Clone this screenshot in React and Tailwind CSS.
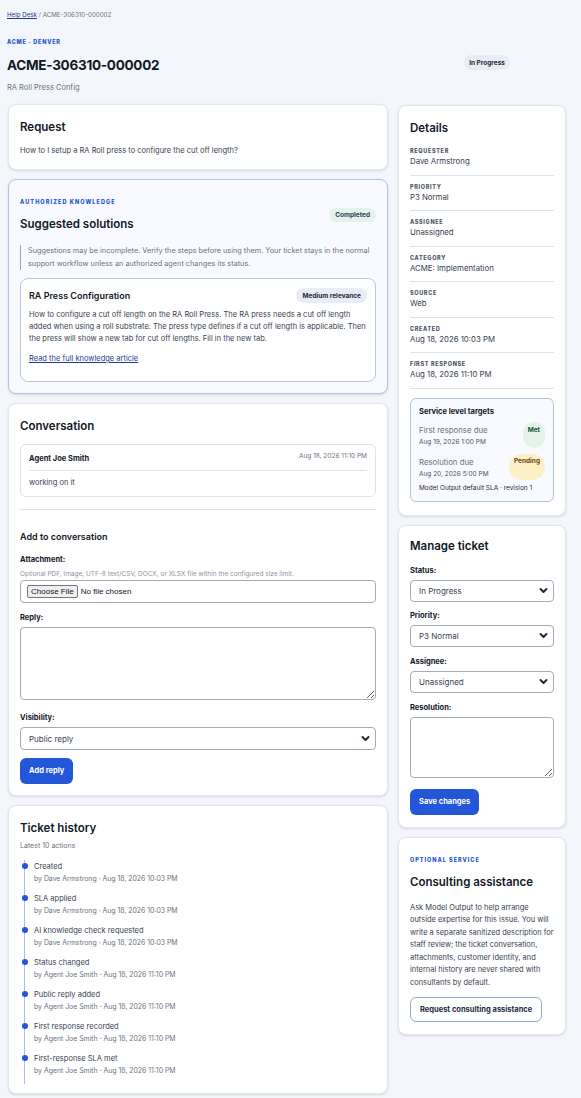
import React from 'react';

const font = { fontFamily: 'Inter, "Noto Sans", sans-serif' };

const Chevron = () => (
  <svg viewBox="0 0 12 12" className="w-[9px] h-[9px]" fill="none" stroke="#1f2937" strokeWidth="2.6" strokeLinecap="round" strokeLinejoin="round">
    <path d="M2 4l4 4 4-4" />
  </svg>
);

const FakeSelect = ({ value, tall }) => (
  <div className={`${tall ? 'h-[23px]' : 'h-[22px]'} border border-[#a3abb9] rounded-[4px] bg-white flex items-center justify-between pl-[8px] pr-[5px] text-[8px] text-[#374151]`}>
    <span>{value}</span>
    <Chevron />
  </div>
);

const Label = ({ children }) => (
  <div className="text-[7.5px] font-bold text-[#111827] leading-[10px]">{children}</div>
);

const Card = ({ className = '', children }) => (
  <div className={`rounded-[8px] border px-[11px] ${className}`}>{children}</div>
);

const details = [
  ['Requester', 'Dave Armstrong'],
  ['Priority', 'P3 Normal'],
  ['Assignee', 'Unassigned'],
  ['Category', 'ACME: Implementation'],
  ['Source', 'Web'],
  ['Created', 'Aug 18, 2026 10:03 PM'],
  ['First response', 'Aug 18, 2026 11:10 PM'],
];

const history = [
  ['Created', 'by Dave Armstrong · Aug 18, 2026 10:03 PM'],
  ['SLA applied', 'by Dave Armstrong · Aug 18, 2026 10:03 PM'],
  ['AI knowledge check requested', 'by Dave Armstrong · Aug 18, 2026 10:03 PM'],
  ['Status changed', 'by Agent Joe Smith · Aug 18, 2026 11:10 PM'],
  ['Public reply added', 'by Agent Joe Smith · Aug 18, 2026 11:10 PM'],
  ['First response recorded', 'by Agent Joe Smith · Aug 18, 2026 11:10 PM'],
  ['First-response SLA met', 'by Agent Joe Smith · Aug 18, 2026 11:10 PM'],
];

export default function App() {
  return (
    <div style={font} className="min-h-[1098px] bg-[#f3f6fb] text-[#111827]">
      {/* page header */}
      <div className="pl-[7px] pr-[71px] pt-[10px]">
        <div className="text-[6.2px] leading-[10px] text-[#6b7280]">
          <span className="underline text-[#1e3a8a]">Help Desk</span> / ACME-306310-000002
        </div>
        <div className="flex items-start justify-between mt-[18px]">
          <div>
            <div className="text-[5.5px] font-extrabold tracking-[0.14em] text-[#2150d0] leading-[8px]">ACME · DENVER</div>
            <h1 className="text-[13.5px] font-bold leading-[22px] mt-[8px] tracking-[-0.02em]">ACME-306310-000002</h1>
          </div>
          <span className="mt-[17px] rounded-full bg-[#e8ecf4] px-[5px] py-[3.5px] text-[6.5px] font-bold text-[#1f2937] leading-[8px]">In Progress</span>
        </div>
        <div className="text-[7.5px] text-[#6b7280] leading-[12px] mt-[6px]">RA Roll Press Config</div>
      </div>

      <div className="grid grid-cols-[380px_168px] gap-x-[10px] pl-[8px] mt-[10px]">
        {/* main column */}
        <div className="flex flex-col gap-[9px]">
          <Card className="bg-white border-[#e2e7ef] shadow-sm pt-[14px] pb-[12px]">
            <h2 className="text-[11.5px] font-semibold leading-[16px]">Request</h2>
            <p className="text-[7.5px] leading-[12px] text-[#374151] mt-[10px]">How to I setup a RA Roll press to configure the cut off length?</p>
          </Card>

          <Card className="bg-[#f8faff] border-[#b2c4e6] shadow-sm pt-[18px] pb-[11px]">
            <div className="flex items-center justify-between">
              <div>
                <div className="text-[5.5px] font-extrabold tracking-[0.2em] text-[#2150d0] leading-[8px]">AUTHORIZED KNOWLEDGE</div>
                <h2 className="text-[11.5px] font-semibold leading-[16px] mt-[10px]">Suggested solutions</h2>
              </div>
              <span className="rounded-full bg-[#e3f2ea] px-[6px] py-[3px] text-[6.5px] font-bold text-[#334155] leading-[8px]">Completed</span>
            </div>
            <p className="mt-[13px] border-l border-[#8ea3c9] pl-[7px] text-[7.3px] leading-[12.5px] text-[#6b7280]">
              Suggestions may be incomplete. Verify the steps before using them. Your ticket stays in the normal support workflow unless an authorized agent changes its status.
            </p>
            <div className="mt-[8px] bg-white border border-[#b9c8e6] rounded-[8px] px-[8px] pt-[9px] pb-[16px]">
              <div className="flex items-center justify-between">
                <h3 className="text-[9px] font-semibold leading-[14px]">RA Press Configuration</h3>
                <span className="rounded-full bg-[#e8ecf4] px-[6px] py-[3.5px] text-[6.5px] font-bold text-[#1f2937] leading-[8px]">Medium relevance</span>
              </div>
              <p className="mt-[6px] text-[7.5px] leading-[12px] text-[#374151]">
                How to configure a cut off length on the RA Roll Press. The RA press needs a cut off length added when using a roll substrate. The press type defines if a cut off length is applicable. Then the press will show a new tab for cut off lengths. Fill in the new tab.
              </p>
              <a className="block mt-[8px] text-[7.5px] leading-[12px] underline text-[#1e3a8a]">Read the full knowledge article</a>
            </div>
          </Card>

          <Card className="bg-white border-[#e2e7ef] shadow-sm pt-[14px] pb-[11px]">
            <h2 className="text-[11.5px] font-semibold leading-[16px]">Conversation</h2>
            <div className="mt-[10px] border border-[#dde3ec] rounded-[6px] px-[8px] pt-[6px] pb-[7px]">
              <div className="flex justify-between items-start pb-[5px] border-b border-[#dde3ec]">
                <span className="text-[7.5px] font-bold leading-[12px] mt-[2px]">Agent Joe Smith</span>
                <span className="text-[6.5px] text-[#6b7280] leading-[10px]">Aug 18, 2026 11:10 PM</span>
              </div>
              <div className="text-[7.5px] text-[#374151] leading-[12px] mt-[6px]">working on it</div>
            </div>
            <div className="border-t border-[#dde3ec] mt-[12px]" />
            <h3 className="text-[9px] font-semibold leading-[14px] mt-[20px]">Add to conversation</h3>
            <div className="mt-[11px]"><Label>Attachment:</Label></div>
            <div className="text-[6.5px] text-[#8b93a1] leading-[10px] mt-[4px]">Optional PDF, image, UTF-8 text/CSV, DOCX, or XLSX file within the configured size limit.</div>
            <div className="mt-[1px] h-[23px] border border-[#a3abb9] rounded-[4px] bg-white flex items-center pl-[6px] gap-[3px] text-[8px] text-[#111827]" style={{ fontFamily: '"Liberation Sans", Arial, sans-serif' }}>
              <span className="border border-[#767676] bg-[#efefef] rounded-[2px] px-[3px] leading-[11px]">Choose File</span>
              <span>No file chosen</span>
            </div>
            <div className="mt-[10px]"><Label>Reply:</Label></div>
            <textarea className="block w-full mt-[4px] h-[73px] border border-[#a3abb9] rounded-[4px] bg-white" />
            <div className="mt-[13px]"><Label>Visibility:</Label></div>
            <div className="mt-[4px]"><FakeSelect value="Public reply" tall /></div>
            <button className="mt-[8px] h-[26px] px-[9px] rounded-[6px] bg-[#2356d8] text-white text-[7.5px] font-bold">Add reply</button>
          </Card>

          <Card className="bg-white border-[#e2e7ef] shadow-sm pt-[14px] pb-[9px]">
            <h2 className="text-[11.5px] font-semibold leading-[16px]">Ticket history</h2>
            <div className="text-[7px] text-[#6b7280] leading-[12px] mt-[4px]">Latest 10 actions</div>
            <div className="relative mt-[8px] ml-[4px] border-l border-[#a9bde9]">
              {history.map(([title, by]) => (
                <div key={title} className="relative pl-[9px] pt-[1px] h-[32px]">
                  <span className="absolute left-[-3.5px] top-[3px] w-[6px] h-[6px] rounded-full bg-[#2356d8]" />
                  <div className="text-[7.5px] text-[#374151] leading-[12px]">{title}</div>
                  <div className="text-[6.9px] text-[#6b7280] leading-[12px]">{by}</div>
                </div>
              ))}
            </div>
          </Card>
        </div>

        {/* side column */}
        <div className="flex flex-col gap-[9px]">
          <Card className="bg-white border-[#e2e7ef] shadow-sm pt-[14px] pb-[13px] mt-[1px]">
            <h2 className="text-[11.5px] font-semibold leading-[16px]">Details</h2>
            <div className="mt-[4px]">
              {details.map(([k, v]) => (
                <div key={k} className="border-b border-[#dde3ec] pt-[7px] pb-[7px]">
                  <div className="text-[5.5px] font-extrabold tracking-[0.12em] uppercase text-[#4b5563] leading-[8px]">{k}</div>
                  <div className="text-[7.8px] text-[#374151] leading-[12.5px]">{v}</div>
                </div>
              ))}
            </div>
            <div className="mt-[9px] border border-[#b2c4e6] bg-[#f8faff] rounded-[6px] px-[8px] pt-[8px] pb-[8px]">
              <div className="text-[7.5px] font-bold leading-[10px]">Service level targets</div>
              <div className="flex justify-between mt-[5px]">
                <div>
                  <div className="text-[7.8px] text-[#6b7280] leading-[12px] mt-[2px]">First response due</div>
                  <div className="text-[6.5px] text-[#4b5563] leading-[12px]">Aug 19, 2026 1:00 PM</div>
                </div>
                <span className="rounded-full bg-[#e3f3ea] px-[5px] pt-[4px] text-[6.5px] font-bold text-[#14532d] leading-[8px]">Met</span>
              </div>
              <div className="flex justify-between mt-[6px]">
                <div>
                  <div className="text-[7.8px] text-[#6b7280] leading-[12px] mt-[2px]">Resolution due</div>
                  <div className="text-[6.5px] text-[#4b5563] leading-[12px]">Aug 20, 2026 5:00 PM</div>
                </div>
                <span className="rounded-full bg-[#fdf0c6] px-[5px] pt-[3px] text-[6.5px] font-bold text-[#713f12] leading-[8px]">Pending</span>
              </div>
              <div className="text-[6.5px] text-[#1f2937] leading-[10px] mt-[3px]">Model Output default SLA · revision 1</div>
            </div>
          </Card>

          <Card className="bg-white border-[#e2e7ef] shadow-sm pt-[12px] pb-[12px]">
            <h2 className="text-[11.5px] font-semibold leading-[16px]">Manage ticket</h2>
            <div className="mt-[12px]"><Label>Status:</Label></div>
            <div className="mt-[4px]"><FakeSelect value="In Progress" /></div>
            <div className="mt-[9px]"><Label>Priority:</Label></div>
            <div className="mt-[4px]"><FakeSelect value="P3 Normal" /></div>
            <div className="mt-[10px]"><Label>Assignee:</Label></div>
            <div className="mt-[4px]"><FakeSelect value="Unassigned" /></div>
            <div className="mt-[10px]"><Label>Resolution:</Label></div>
            <textarea className="block w-full mt-[4px] h-[61px] border border-[#a3abb9] rounded-[4px] bg-white" />
            <button className="mt-[11px] h-[26px] px-[9px] rounded-[6px] bg-[#2356d8] text-white text-[7.5px] font-bold">Save changes</button>
          </Card>

          <Card className="bg-white border-[#e2e7ef] shadow-sm pt-[18px] pb-[12px]">
            <div className="text-[5.5px] font-extrabold tracking-[0.18em] text-[#2150d0] leading-[8px]">OPTIONAL SERVICE</div>
            <h2 className="text-[11.5px] font-semibold leading-[16px] mt-[10px]">Consulting assistance</h2>
            <p className="text-[7.45px] text-[#374151] leading-[12.5px] mt-[12px]">
              Ask Model Output to help arrange outside expertise for this issue. You will write a separate sanitized description for staff review; the ticket conversation, attachments, customer identity, and internal history are never shared with consultants by default.
            </p>
            <button className="mt-[8px] h-[25px] px-[9px] rounded-[6px] border border-[#91abdf] bg-white text-[#1e293b] text-[7.5px] font-bold">Request consulting assistance</button>
          </Card>
        </div>
      </div>
    </div>
  );
}
